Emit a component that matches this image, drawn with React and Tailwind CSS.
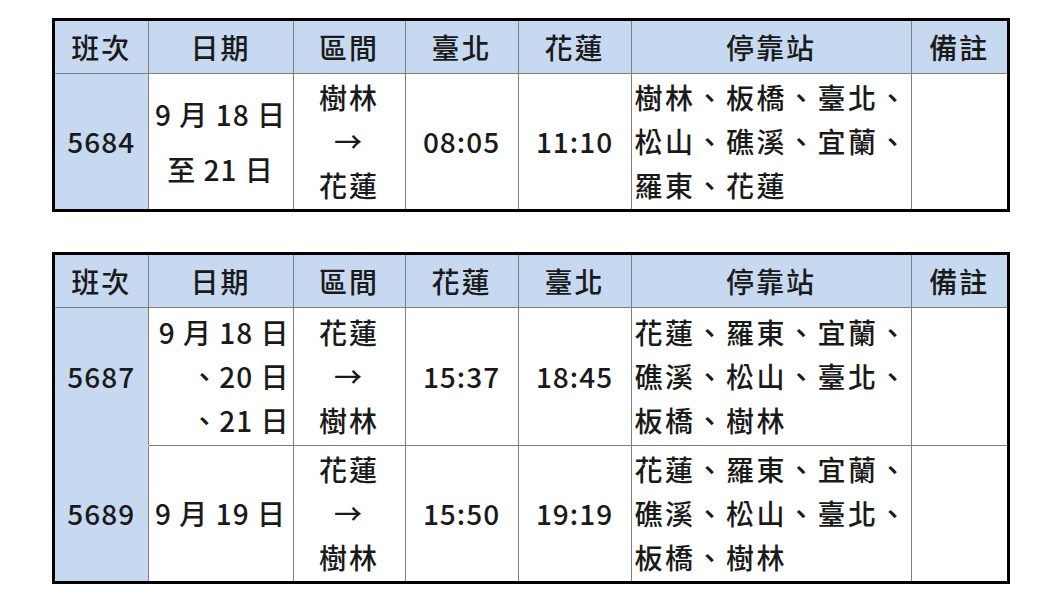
const font = { fontFamily: '"Noto Sans CJK TC", "Noto Sans", sans-serif' };

const heads1 = ['班次', '日期', '區間', '臺北', '花蓮', '停靠站', '備註'];
const heads2 = ['班次', '日期', '區間', '花蓮', '臺北', '停靠站', '備註'];

function Lines({ items, className = '' }) {
  return (
    <div className={`flex flex-col ${className}`}>
      {items.map((t, i) => (
        <span key={i} className="leading-[44px] whitespace-nowrap">{t}</span>
      ))}
    </div>
  );
}

function Head({ labels }) {
  return (
    <tr className="h-[52px] bg-[#c6d9f0]">
      {labels.map((h) => (
        <th key={h} className="border border-[#7f7f7f] font-medium text-center align-middle">
          {h}
        </th>
      ))}
    </tr>
  );
}

function Cols() {
  return (
    <colgroup>
      <col className="w-[93px]" />
      <col className="w-[145px]" />
      <col className="w-[112px]" />
      <col className="w-[113px]" />
      <col className="w-[113px]" />
      <col className="w-[280px]" />
      <col className="w-[96px]" />
    </colgroup>
  );
}

function Row({ no, date, route, t1, t2, stops, h, lastNo }) {
  return (
    <tr className={h}>
      <td className={`bg-[#c6d9f0] border border-[#7f7f7f] text-center align-middle tracking-[1px] ${lastNo ? '' : 'border-b-[#c6d9f0]'}`}>
        {no}
      </td>
      <td className="border border-[#7f7f7f] align-middle px-[3px] tracking-[1px] whitespace-nowrap">{date}</td>
      <td className="border border-[#7f7f7f] align-middle">
        <Lines items={route} className="items-center" />
      </td>
      <td className="border border-[#7f7f7f] text-center align-middle tracking-[1px] whitespace-nowrap">{t1}</td>
      <td className="border border-[#7f7f7f] text-center align-middle tracking-[1px] whitespace-nowrap">{t2}</td>
      <td className="border border-[#7f7f7f] align-middle pl-[3px] tracking-[2.5px]">
        <Lines items={stops} />
      </td>
      <td className="border border-[#7f7f7f]"></td>
    </tr>
  );
}

export default function App() {
  return (
    <div className="w-[1060px] h-[596px] bg-white text-[#1a1a1a] text-[28px] font-medium tracking-[2px] overflow-hidden" style={font}>
      <div className="pl-[52px] pt-[18px] flex flex-col gap-[40px]">
        <div className="w-[958px] border-[3px] border-black">
          <table className="w-full table-fixed border-collapse border-hidden">
            <Cols />
            <thead>
              <Head labels={heads1} />
            </thead>
            <tbody>
              <Row
                h="h-[136px]"
                lastNo
                no="5684"
                date={
                  <div className="flex flex-col items-center gap-[11px]">
                    <span className="leading-[44px]">9 月 18 日</span>
                    <span className="leading-[44px]">至 21 日</span>
                  </div>
                }
                route={['樹林', '→', '花蓮']}
                t1="08:05"
                t2="11:10"
                stops={['樹林、板橋、臺北、', '松山、礁溪、宜蘭、', '羅東、花蓮']}
              />
            </tbody>
          </table>
        </div>

        <div className="w-[958px] border-[3px] border-black">
          <table className="w-full table-fixed border-collapse border-hidden">
            <Cols />
            <thead>
              <Head labels={heads2} />
            </thead>
            <tbody>
              <Row
                h="h-[138px]"
                no="5687"
                date={<Lines items={['9 月 18 日', '、20 日', '、21 日']} className="items-end" />}
                route={['花蓮', '→', '樹林']}
                t1="15:37"
                t2="18:45"
                stops={['花蓮、羅東、宜蘭、', '礁溪、松山、臺北、', '板橋、樹林']}
              />
              <Row
                h="h-[136px]"
                lastNo
                no="5689"
                date={<div className="text-center">9 月 19 日</div>}
                route={['花蓮', '→', '樹林']}
                t1="15:50"
                t2="19:19"
                stops={['花蓮、羅東、宜蘭、', '礁溪、松山、臺北、', '板橋、樹林']}
              />
            </tbody>
          </table>
        </div>
      </div>
    </div>
  );
}
